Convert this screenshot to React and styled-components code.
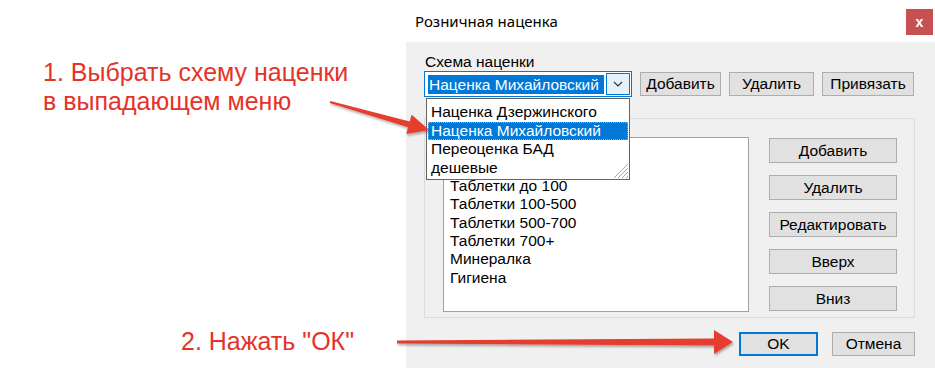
import React from 'react';
import styled, { createGlobalStyle } from 'styled-components';

const GlobalStyle = createGlobalStyle`
  html, body {
    margin: 0;
    padding: 0;
    background: #fff;
  }
  body {
    font-family: "Liberation Sans", Arial, sans-serif;
  }
`;

const Page = styled.div`
  position: relative;
  width: 935px;
  height: 368px;
  display: flex;
  overflow: hidden;
  background: #fff;
`;

const Notes = styled.div`
  width: 406px;
  flex: none;
  display: flex;
  flex-direction: column;
  padding-top: 58px;
  box-sizing: border-box;
  color: #e63329;
  font-family: "Liberation Sans", Arial, sans-serif;
  font-size: 25px;
  line-height: 29px;
`;

const Note = styled.div`
  padding-left: ${p => p.$indent}px;
  white-space: nowrap;

  &:last-child {
    margin-top: auto;
    margin-bottom: 12px;
  }
`;

const Dialog = styled.div`
  flex: 1;
  display: flex;
  flex-direction: column;
  font-family: "Liberation Sans", Arial, sans-serif;
  font-size: 15.5px;
  color: #000;
`;

const TitleBar = styled.div`
  height: 42px;
  flex: none;
  display: flex;
  align-items: center;
  padding-left: 9px;
  background: #fff;
`;

const Title = styled.span`
  flex: 1;
  font-family: "Noto Sans", "Liberation Sans", sans-serif;
  font-size: 15px;
`;

const CloseButton = styled.div`
  align-self: flex-start;
  margin-top: 9px;
  margin-right: 2px;
  width: 27px;
  height: 26px;
  background: #c75050;
  color: #fff;
  display: flex;
  align-items: center;
  justify-content: center;
  font-size: 14px;
  font-weight: bold;
  line-height: 1;
`;

const Client = styled.div`
  flex: 1;
  background: #f0f0f0;
  padding: 11px 20px 0 18px;
  display: flex;
  flex-direction: column;
`;

const Label = styled.div`
  line-height: 17px;
  padding-left: 1px;
`;

const SchemeRow = styled.div`
  margin-top: 1px;
  height: 26px;
  display: flex;
  align-items: center;
  gap: 8px;
`;

const ComboWrap = styled.div`
  position: relative;
  width: 208px;
  height: 26px;
  flex: none;
`;

const Combo = styled.div`
  height: 100%;
  box-sizing: border-box;
  border: 1px solid #0078d7;
  background: #fff;
  display: flex;
  align-items: center;
  gap: 2px;
  padding: 0 1px 0 3px;
`;

const ComboValue = styled.div`
  width: 176px;
  height: 19px;
  line-height: 19px;
  background: #0078d7;
  color: #fff;
  padding-left: 1px;
  box-sizing: border-box;
  white-space: nowrap;
  overflow: hidden;
`;

const ComboArrow = styled.div`
  width: 24px;
  height: 22px;
  box-sizing: border-box;
  border: 1px solid #0078d7;
  background: #e5f1fb;
  display: flex;
  align-items: center;
  justify-content: center;
`;

const DropList = styled.div`
  position: absolute;
  top: 27px;
  left: 2px;
  width: 204px;
  height: 82px;
  box-sizing: border-box;
  border: 1px solid #646464;
  background: #fff;
  padding-top: 4px;
  z-index: 3;
`;

const DropItem = styled.div`
  margin: 0 1px;
  padding-left: 3px;
  height: 18.5px;
  line-height: 18.5px;
  white-space: nowrap;
  box-sizing: border-box;
  background: ${p => (p.$active ? '#0078d7' : 'transparent')};
  color: ${p => (p.$active ? '#fff' : '#000')};
  outline: ${p => (p.$active ? '1px dotted #e0a040' : 'none')};
  outline-offset: -1px;
`;

const Grip = styled.svg`
  position: absolute;
  right: 1px;
  bottom: 1px;
`;

const Button = styled.div`
  width: ${p => p.$w}px;
  height: ${p => p.$h || 24}px;
  flex: none;
  box-sizing: border-box;
  border: ${p => (p.$default ? '2px solid #0078d7' : '1px solid #adadad')};
  background: #e1e1e1;
  display: flex;
  align-items: center;
  justify-content: center;
  white-space: nowrap;
`;

const Group = styled.div`
  margin-top: 21px;
  height: 200px;
  box-sizing: border-box;
  border: 1px solid #dcdcdc;
  display: flex;
  padding: 18px 17px 5px 18px;
`;

const ListBox = styled.div`
  width: 306px;
  height: 175px;
  flex: none;
  box-sizing: border-box;
  border: 1px solid #a0a0a0;
  background: #fff;
  padding: 2px 0 0 6px;
  overflow: hidden;
`;

const ListItem = styled.div`
  height: 18.4px;
  line-height: 18.4px;
  white-space: nowrap;
`;

const SideButtons = styled.div`
  margin-left: 20px;
  padding-top: 1px;
  display: flex;
  flex-direction: column;
  gap: 12px;
`;

const Footer = styled.div`
  margin-top: 14px;
  display: flex;
  justify-content: flex-end;
  gap: 14px;
`;

const Overlay = styled.svg`
  position: absolute;
  top: 0;
  left: 0;
  pointer-events: none;
  z-index: 5;
`;

const schemes = ['Наценка Дзержинского', 'Наценка Михайловский', 'Переоценка БАД', 'дешевые'];
// the first two rows sit under the open drop-down, so they stay blank
const groups = [
  '',
  '',
  'Таблетки до 100',
  'Таблетки 100-500',
  'Таблетки 500-700',
  'Таблетки 700+',
  'Минералка',
  'Гигиена',
];
const sideButtons = ['Добавить', 'Удалить', 'Редактировать', 'Вверх', 'Вниз'];

function Arrows() {
  return (
    <Overlay width="935" height="368" viewBox="0 0 935 368">
      <defs>
        <filter id="shade" x="-10%" y="-50%" width="120%" height="200%">
          <feDropShadow dx="1" dy="2" stdDeviation="1" floodColor="#000" floodOpacity="0.3" />
        </filter>
      </defs>
      <polygon
        filter="url(#shade)"
        fill="#e53c2e"
        points="329.7,103 408.1,127.2 406.2,133.9 429.1,130 411.6,114.7 409.7,121.4 330.3,101"
      />
      <polygon
        filter="url(#shade)"
        fill="#e53c2e"
        points="397,343.5 714,345.5 714,354 733,342 714,330 714,338.5 397,340.5"
      />
    </Overlay>
  );
}

export default function App() {
  return (
    <>
      <GlobalStyle />
      <Page>
        <Notes>
          <Note $indent={43}>
            1. Выбрать схему наценки
            <br />
            в выпадающем меню
          </Note>
          <Note $indent={181}>2. Нажать "ОК"</Note>
        </Notes>

        <Dialog>
          <TitleBar>
            <Title>Розничная наценка</Title>
            <CloseButton>x</CloseButton>
          </TitleBar>

          <Client>
            <Label>Схема наценки</Label>
            <SchemeRow>
              <ComboWrap>
                <Combo>
                  <ComboValue>Наценка Михайловский</ComboValue>
                  <ComboArrow>
                    <svg width="10" height="6" viewBox="0 0 10 6">
                      <polyline points="1,1 5,5 9,1" fill="none" stroke="#333" strokeWidth="1.2" />
                    </svg>
                  </ComboArrow>
                </Combo>
                <DropList>
                  {schemes.map(s => (
                    <DropItem key={s} $active={s === 'Наценка Михайловский'}>
                      {s}
                    </DropItem>
                  ))}
                  <Grip width="16" height="16" viewBox="0 0 16 16">
                    {[2, 6, 10, 14].map(o => (
                      <line key={o} x1="16" y1={o} x2={o} y2="16" stroke="#a8a8a8" strokeWidth="1" />
                    ))}
                  </Grip>
                </DropList>
              </ComboWrap>
              <Button $w={81}>Добавить</Button>
              <Button $w={85}>Удалить</Button>
              <Button $w={92}>Привязать</Button>
            </SchemeRow>

            <Group>
              <ListBox>
                {groups.map((g, i) => (
                  <ListItem key={i}>{g}</ListItem>
                ))}
              </ListBox>
              <SideButtons>
                {sideButtons.map(b => (
                  <Button key={b} $w={128} $h={25}>
                    {b}
                  </Button>
                ))}
              </SideButtons>
            </Group>

            <Footer>
              <Button $w={79} $default>
                OK
              </Button>
              <Button $w={83}>Отмена</Button>
            </Footer>
          </Client>
        </Dialog>

        <Arrows />
      </Page>
    </>
  );
}
